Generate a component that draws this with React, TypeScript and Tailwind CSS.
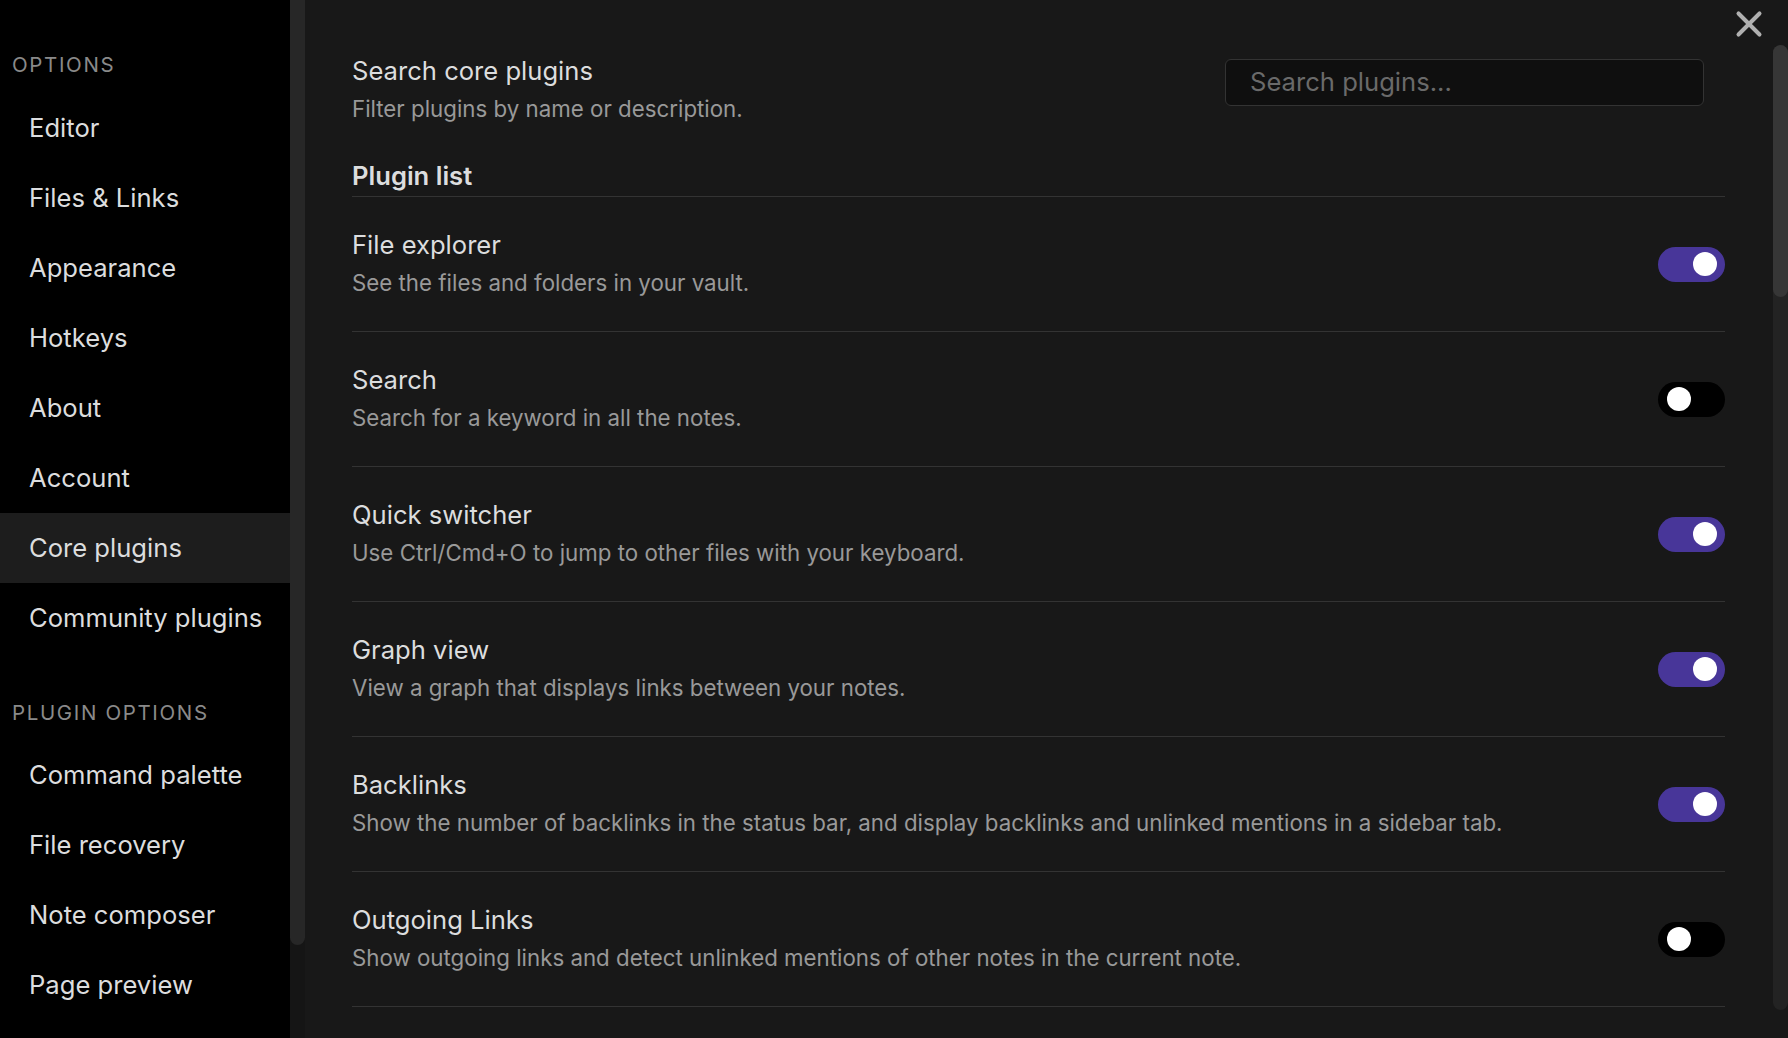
import { X } from "lucide-react";

const optionItems = ["Editor", "Files & Links", "Appearance", "Hotkeys", "About", "Account", "Core plugins", "Community plugins"];
const pluginOptionItems = ["Command palette", "File recovery", "Note composer", "Page preview"];

const plugins = [
  { name: "File explorer", desc: "See the files and folders in your vault.", on: true },
  { name: "Search", desc: "Search for a keyword in all the notes.", on: false },
  { name: "Quick switcher", desc: "Use Ctrl/Cmd+O to jump to other files with your keyboard.", on: true },
  { name: "Graph view", desc: "View a graph that displays links between your notes.", on: true },
  {
    name: "Backlinks",
    desc: "Show the number of backlinks in the status bar, and display backlinks and unlinked mentions in a sidebar tab.",
    on: true,
  },
  {
    name: "Outgoing Links",
    desc: "Show outgoing links and detect unlinked mentions of other notes in the current note.",
    on: false,
  },
];

function Toggle({ on }: { on: boolean }) {
  return (
    <div
      className={`w-[67px] h-[35px] shrink-0 rounded-full flex items-center ${
        on ? "bg-[#483699] justify-end pr-[8px]" : "bg-black justify-start pl-[9px]"
      }`}
    >
      <div className="w-[24px] h-[24px] rounded-full bg-white" />
    </div>
  );
}

function NavItem({ label, active }: { label: string; active?: boolean }) {
  return (
    <div
      className={`h-[70px] flex items-center pl-[29px] text-[25.6px] text-[#dcddde] ${
        active ? "bg-[#1d1d1d]" : ""
      }`}
    >
      {label}
    </div>
  );
}

export default function App() {
  return (
    <div className="flex h-[1038px] w-full overflow-hidden bg-[#181818] font-['Inter',sans-serif]">
      {/* Sidebar */}
      <div className="w-[290px] shrink-0 bg-black flex flex-col">
        <div className="mt-[47px] mb-[10px] h-[36px] leading-[36px] pl-[12px] text-[20.5px] tracking-[0.08em] text-[#8a8a8a]">
          OPTIONS
        </div>
        {optionItems.map((item) => (
          <NavItem key={item} label={item} active={item === "Core plugins"} />
        ))}
        <div className="mt-[42px] mb-[9px] h-[36px] leading-[36px] pl-[12px] text-[20.5px] tracking-[0.08em] text-[#8a8a8a]">
          PLUGIN OPTIONS
        </div>
        {pluginOptionItems.map((item) => (
          <NavItem key={item} label={item} />
        ))}
      </div>

      {/* Sidebar scrollbar */}
      <div className="w-[15px] shrink-0 bg-[#151515]">
        <div className="h-[945px] bg-[#272727] rounded-b-full" />
      </div>

      {/* Main content */}
      <div className="relative flex-1 flex">
        <div className="flex-1 pl-[47px] pr-[48px] pt-[53px] flex flex-col">
          {/* Search row */}
          <div className="flex items-start justify-between">
            <div className="flex flex-col">
              <div className="leading-[36px] text-[25.6px] text-[#dcddde]">Search core plugins</div>
              <div className="mt-[2px] leading-[36px] text-[22.3px] text-[#999999]">
                Filter plugins by name or description.
              </div>
            </div>
            <div className="mt-[6px] mr-[21px] w-[479px] h-[47px] rounded-[6px] border border-[#333333] bg-[#0f0f0f] flex items-center px-[24px] text-[25.6px] text-[#6a6a6a]">
              Search plugins...
            </div>
          </div>

          {/* Heading */}
          <div className="mt-[31px] pb-[2px] border-b border-[#333333] leading-[36px] text-[25.6px] font-semibold text-[#dcddde]">
            Plugin list
          </div>

          {/* Plugin rows */}
          {plugins.map((p) => (
            <div key={p.name} className="flex items-center justify-between border-b border-[#333333] pt-[30px] pb-[30px]">
              <div className="flex flex-col">
                <div className="leading-[36px] text-[25.6px] text-[#dcddde]">{p.name}</div>
                <div className="mt-[2px] leading-[36px] text-[22.3px] text-[#999999]">{p.desc}</div>
              </div>
              <Toggle on={p.on} />
            </div>
          ))}
        </div>

        {/* Main scrollbar */}
        <div className="w-[15px] shrink-0 pt-[45px]">
          <div className="h-[965px] bg-[#232323] rounded-full">
            <div className="h-[252px] bg-[#363636] rounded-full" />
          </div>
        </div>

        {/* Close button */}
        <button className="absolute top-[3px] right-[18px] text-[#b0b0b0]">
          <X size={42} strokeWidth={2.3} />
        </button>
      </div>
    </div>
  );
}
